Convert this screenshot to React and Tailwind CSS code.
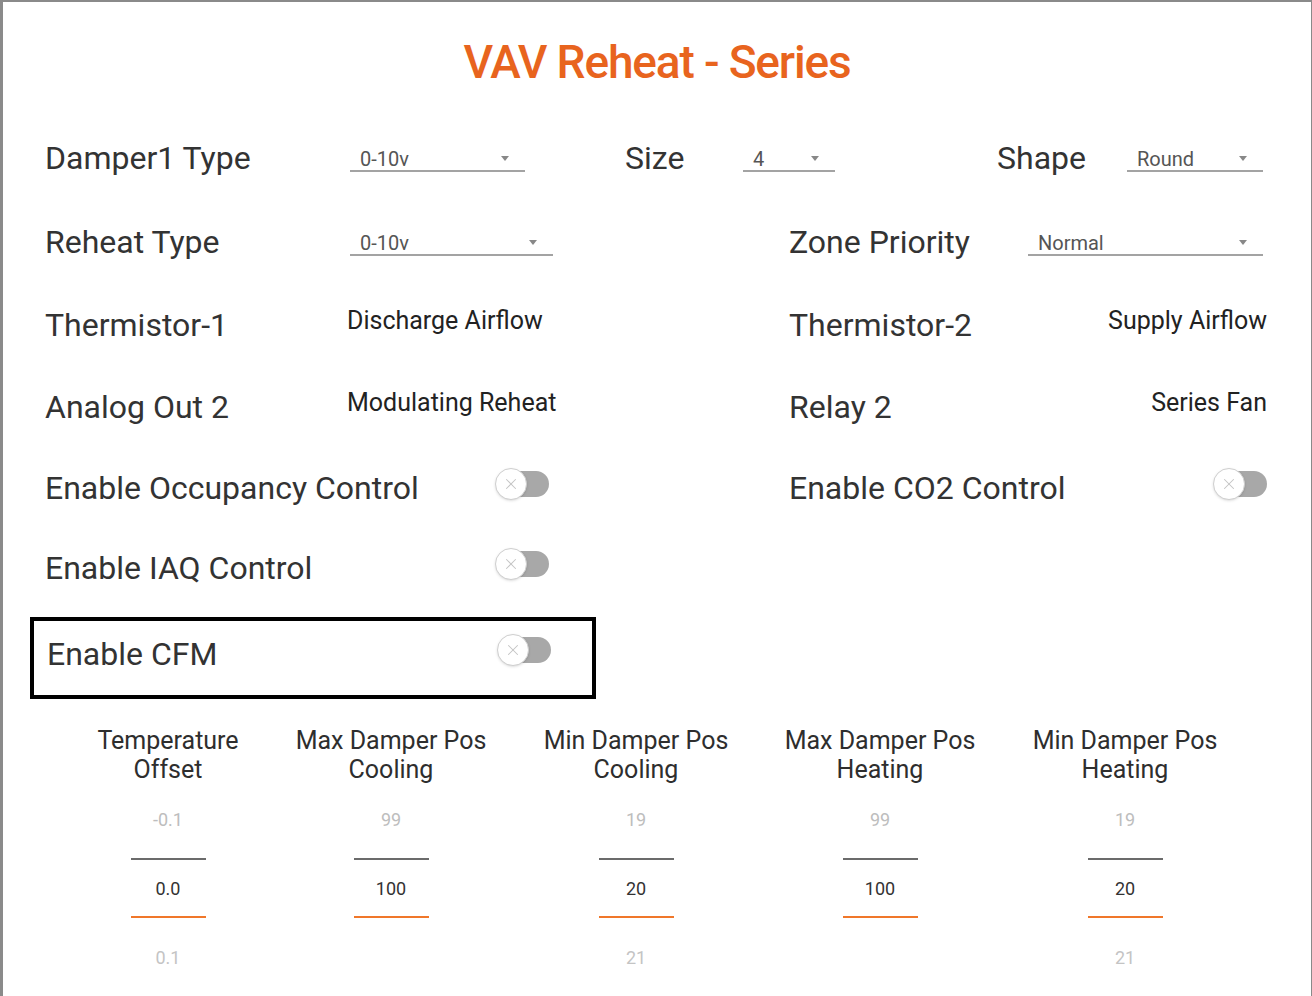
import React from "react";
import { X } from "lucide-react";

const Dropdown = ({ value, width }) => (
  <div
    className={`relative h-[28px] flex items-center pl-[10px] pt-[4px] border-b-2 border-[#a3a3a3] text-[20px] text-[#555] ${width}`}
  >
    {value}
    <span className="absolute right-[16px] top-[12px] w-0 h-0 border-l-[4px] border-r-[4px] border-t-[5px] border-l-transparent border-r-transparent border-t-[#888]" />
  </div>
);

const Toggle = () => (
  <div className="relative w-[54px] h-[32px] mb-[8px] shrink-0">
    <div className="absolute left-[8px] right-0 top-[3px] bottom-[3px] rounded-full bg-[#a8a8a8]" />
    <div className="absolute left-0 top-0 w-[32px] h-[32px] rounded-full bg-white border border-[#cfcfcf] shadow-sm flex items-center justify-center">
      <X size={18} strokeWidth={1.4} color="#c4c4c4" />
    </div>
  </div>
);

const Picker = ({ title, above, value, below, className }) => (
  <div className={`w-[200px] flex flex-col items-center ${className}`}>
    <div className="text-[25px] leading-[29px] text-[#2e2e2e] text-center">
      {title.map((t) => (
        <div key={t}>{t}</div>
      ))}
    </div>
    <div className="mt-[24px] h-[24px] leading-[24px] text-[18px] text-[#bdbdbd]">{above}</div>
    <div className="mt-[26px] w-[75px] h-[2px] bg-[#6b6b6b]" />
    <div className="mt-[17px] h-[24px] leading-[24px] text-[18px] text-[#333]">{value}</div>
    <div className="mt-[15px] w-[75px] h-[2px] bg-[#f0772a]" />
    <div className="mt-[28px] h-[24px] leading-[24px] text-[18px] text-[#c4c4c4]">{below}</div>
  </div>
);

export default function App() {
  return (
    <div
      className="w-[1312px] h-[996px] bg-white border-l-[3px] border-t-2 border-r border-[#8a8a8a] overflow-hidden pl-[42px] pr-[44px] text-[#333]"
      style={{ fontFamily: "Roboto, 'Noto Sans', sans-serif" }}
    >
      <div className="h-[114px] flex items-center justify-center -ml-[42px] -mr-[44px] pt-[6px]">
        <h1 className="text-[46px] font-medium text-[#e8641e] tracking-tight">VAV Reheat - Series</h1>
      </div>

      <div className="text-[32px]">
        {/* row 1 */}
        <div className="h-[84px] flex items-center">
          <div className="w-[305px]">Damper1 Type</div>
          <Dropdown value="0-10v" width="w-[175px]" />
          <div className="ml-[100px] w-[118px]">Size</div>
          <Dropdown value="4" width="w-[92px]" />
          <div className="ml-[162px] w-[130px]">Shape</div>
          <Dropdown value="Round" width="w-[136px]" />
        </div>

        {/* row 2 */}
        <div className="h-[84px] flex items-center">
          <div className="w-[744px] flex items-center">
            <div className="w-[305px]">Reheat Type</div>
            <Dropdown value="0-10v" width="w-[203px]" />
          </div>
          <div className="w-[239px]">Zone Priority</div>
          <Dropdown value="Normal" width="w-[235px]" />
        </div>

        {/* row 3 */}
        <div className="h-[82px] flex items-center">
          <div className="w-[744px] flex items-center">
            <div className="w-[302px]">Thermistor-1</div>
            <div className="text-[25px] text-[#222] mb-[8px]">Discharge Airflow</div>
          </div>
          <div className="flex-1">Thermistor-2</div>
          <div className="text-[25px] text-[#222] mb-[8px]">Supply Airflow</div>
        </div>

        {/* row 4 */}
        <div className="h-[82px] flex items-center">
          <div className="w-[744px] flex items-center">
            <div className="w-[302px]">Analog Out 2</div>
            <div className="text-[25px] text-[#222] mb-[8px]">Modulating Reheat</div>
          </div>
          <div className="flex-1">Relay 2</div>
          <div className="text-[25px] text-[#222] mb-[8px]">Series Fan</div>
        </div>

        {/* row 5 */}
        <div className="h-[80px] flex items-center">
          <div className="w-[744px] flex items-center">
            <div className="w-[450px]">Enable Occupancy Control</div>
            <Toggle />
          </div>
          <div className="flex-1">Enable CO2 Control</div>
          <Toggle />
        </div>

        {/* row 6 */}
        <div className="h-[80px] flex items-center">
          <div className="w-[450px]">Enable IAQ Control</div>
          <Toggle />
        </div>

        {/* row 7 */}
        <div className="mt-[9px] -ml-[15px] w-[566px] h-[82px] border-4 border-black flex items-center pl-[13px] pb-[8px]">
          <div className="w-[450px]">Enable CFM</div>
          <Toggle />
        </div>
      </div>

      <div className="mt-[27px] flex">
        <Picker className="ml-[23px]" title={["Temperature", "Offset"]} above="-0.1" value="0.0" below="0.1" />
        <Picker className="ml-[23px]" title={["Max Damper Pos", "Cooling"]} above="99" value="100" below="" />
        <Picker className="ml-[45px]" title={["Min Damper Pos", "Cooling"]} above="19" value="20" below="21" />
        <Picker className="ml-[44px]" title={["Max Damper Pos", "Heating"]} above="99" value="100" below="" />
        <Picker className="ml-[45px]" title={["Min Damper Pos", "Heating"]} above="19" value="20" below="21" />
      </div>
    </div>
  );
}
